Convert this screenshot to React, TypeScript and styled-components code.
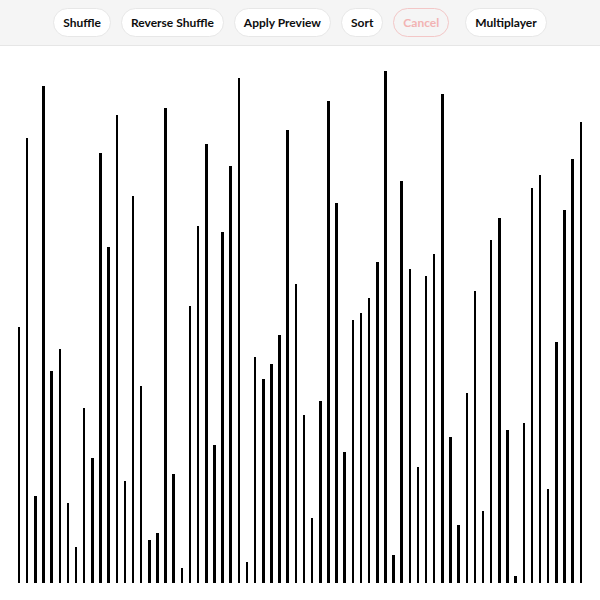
import React from 'react';
import styled, { createGlobalStyle } from 'styled-components';

const GlobalStyle = createGlobalStyle`
  html, body {
    margin: 0;
    padding: 0;
    background: #ffffff;
  }
  body {
    font-family: Lato, "Liberation Sans", sans-serif;
  }
`;

// bar heights in px, left to right
const VALUES = [
  256, 445, 87, 497, 212, 234, 80, 36, 175, 125, 430, 336, 468, 102, 387, 197, 43, 50,
  475, 109, 15, 277, 357, 439, 138, 351, 417, 505, 21, 226, 204, 219, 248, 453, 299,
  168, 65, 182, 482, 380, 131, 263, 270, 285, 321, 512, 28, 402, 314, 116, 307, 329, 489,
  146, 58, 190, 292, 72, 343, 365, 153, 7, 160, 395, 408, 94, 241, 373, 424, 461,
];

const Page = styled.div`
  display: flex;
  flex-direction: column;
  height: 600px;
  overflow: hidden;
`;

const Toolbar = styled.div`
  display: flex;
  justify-content: center;
  align-items: center;
  gap: 16px;
  height: 46px;
  box-sizing: border-box;
  padding-bottom: 1px;
  background: #f5f5f5;
  border-bottom: 1px solid #e6e6e6;
`;

const ButtonGroup = styled.div`
  display: flex;
  align-items: center;
  gap: 10px;
`;

const Button = styled.button<{ $danger?: boolean }>`
  height: 29px;
  padding: 0 9px;
  box-sizing: border-box;
  border-radius: 999px;
  border: 1px solid ${(p) => (p.$danger ? '#f3c7c7' : '#e7e7e7')};
  background: ${(p) => (p.$danger ? 'transparent' : '#ffffff')};
  color: ${(p) => (p.$danger ? '#f2b3b3' : '#0d0d0d')};
  font-family: Lato, "Liberation Sans", sans-serif;
  font-size: 12px;
  font-weight: 700;
  cursor: ${(p) => (p.$danger ? 'default' : 'pointer')};
`;

const Chart = styled.div`
  flex: 1;
  display: flex;
  align-items: flex-end;
  padding: 0 15px 17px 15px;
  background: #ffffff;
`;

const Slot = styled.div`
  flex: 1;
  display: flex;
  justify-content: center;
  align-items: flex-end;
  height: 100%;
`;

const Bar = styled.div`
  width: 2.5px;
  background: #000000;
`;

export default function App() {
  return (
    <Page>
      <GlobalStyle />
      <Toolbar>
        <ButtonGroup>
          <Button>Shuffle</Button>
          <Button>Reverse Shuffle</Button>
          <Button>Apply Preview</Button>
          <Button>Sort</Button>
          <Button $danger disabled>
            Cancel
          </Button>
        </ButtonGroup>
        <Button>Multiplayer</Button>
      </Toolbar>
      <Chart>
        {VALUES.map((v, i) => (
          <Slot key={i}>
            <Bar style={{ height: v }} />
          </Slot>
        ))}
      </Chart>
    </Page>
  );
}
